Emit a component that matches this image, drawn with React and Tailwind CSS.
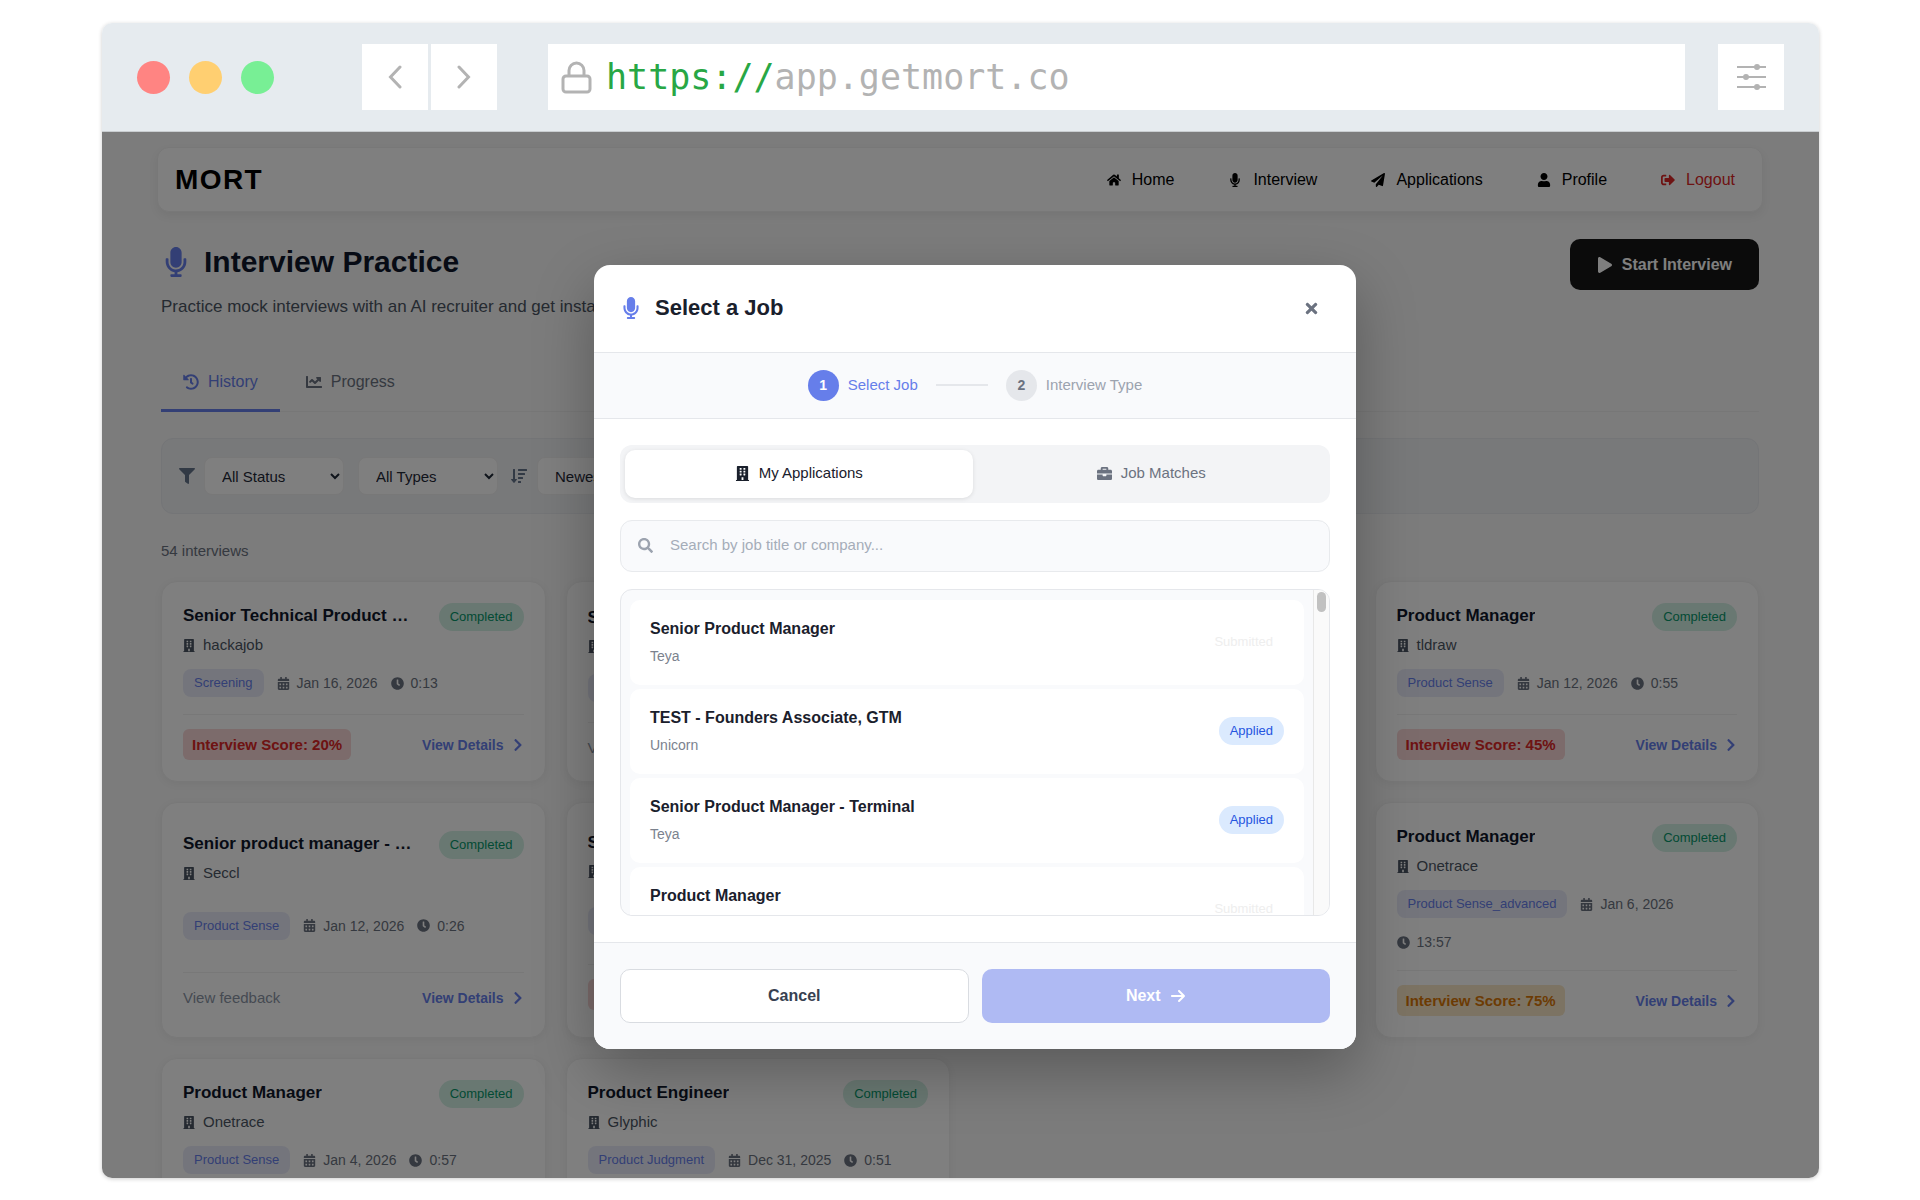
import React from "react";
import {
  FaHome,
  FaMicrophone,
  FaPaperPlane,
  FaUser,
  FaSignOutAlt,
  FaHistory,
  FaChartLine,
  FaFilter,
  FaSortAmountDown,
  FaPlay,
  FaBuilding,
  FaCalendarAlt,
  FaChevronRight,
  FaClock,
  FaTimes,
  FaBriefcase,
  FaSearch,
} from "react-icons/fa";
import { FaArrowRight } from "react-icons/fa6";

const NAV_LINKS = [
  { label: "Home", icon: FaHome, tone: "text-black" },
  { label: "Interview", icon: FaMicrophone, tone: "text-black" },
  { label: "Applications", icon: FaPaperPlane, tone: "text-black" },
  { label: "Profile", icon: FaUser, tone: "text-black" },
  { label: "Logout", icon: FaSignOutAlt, tone: "text-[#dc2626]" },
];

const INTERVIEWS = [
  { title: "Senior Technical Product …", company: "hackajob", type: "Screening", date: "Jan 16, 2026", length: "0:13", score: 20 },
  { title: "Senior Product Manager", company: "Teya", type: "Screening", date: "Jan 14, 2026", length: "0:20" },
  { title: "Product Manager", company: "tldraw", type: "Product Sense", date: "Jan 12, 2026", length: "0:55", score: 45, place: "col-start-4" },
  { title: "Senior product manager - …", company: "Seccl", type: "Product Sense", date: "Jan 12, 2026", length: "0:26" },
  { title: "Senior Product Manager", company: "Teya", type: "Product Sense", date: "Jan 8, 2026", length: "0:40", score: 30 },
  { title: "Product Manager", company: "Onetrace", type: "Product Sense_advanced", date: "Jan 6, 2026", length: "13:57", score: 75, place: "col-start-4" },
  { title: "Product Manager", company: "Onetrace", type: "Product Sense", date: "Jan 4, 2026", length: "0:57" },
  { title: "Product Engineer", company: "Glyphic", type: "Product Judgment", date: "Dec 31, 2025", length: "0:51" },
];

const JOBS = [
  { title: "Senior Product Manager", company: "Teya", status: "Submitted" },
  { title: "TEST - Founders Associate, GTM", company: "Unicorn", status: "Applied" },
  { title: "Senior Product Manager - Terminal", company: "Teya", status: "Applied" },
  { title: "Product Manager", company: "Onetrace", status: "Submitted" },
];

function BrowserBar() {
  return (
    <div className="flex shrink-0 items-center border-b border-[#c9cdd0] bg-[#e6ebef] px-[35px] py-[21px]">
      <div className="flex gap-[19px]">
        <span className="size-[33px] rounded-full bg-[#ff8482]" />
        <span className="size-[33px] rounded-full bg-[#ffcf71]" />
        <span className="size-[33px] rounded-full bg-[#78ef95]" />
      </div>
      <div className="ml-[88px] flex gap-[3px]">
        <button aria-label="Back" className="flex size-[66px] items-center justify-center bg-white">
          <svg width="14" height="24" viewBox="0 0 14 24" fill="none" stroke="#b3b3b3" strokeWidth="3" strokeLinecap="round">
            <path d="M12 2 2.500 12 12 22" />
          </svg>
        </button>
        <button aria-label="Forward" className="flex size-[66px] items-center justify-center bg-white">
          <svg width="14" height="24" viewBox="0 0 14 24" fill="none" stroke="#b3b3b3" strokeWidth="3" strokeLinecap="round">
            <path d="M2 2 11.500 12 2 22" />
          </svg>
        </button>
      </div>
      <div className="ml-[51px] flex h-[66px] grow items-center gap-[14px] bg-white pl-[13px]">
        <svg width="31" height="33" viewBox="0 0 31 33" fill="none" stroke="#b3b3b3" strokeWidth="3">
          <rect x="2" y="15" width="27" height="16" rx="3" />
          <path d="M8 15V9.500a7.500 7.500 0 0 1 15 0V15" />
        </svg>
        <p className="font-['DejaVu_Sans_Mono',monospace] text-[35px] leading-[42px] text-[#b3b3b3]">
          <span className="text-[#28a745]">https://</span>app.getmort.co
        </p>
      </div>
      <button aria-label="Settings" className="ml-[33px] flex size-[66px] items-center justify-center bg-white">
        <svg width="29" height="26" viewBox="0 0 29 26" stroke="#b3b3b3" strokeWidth="2" fill="#b3b3b3">
          <path d="M0 3h29M0 13h29M0 23h29" />
          <circle cx="20" cy="3" r="2" />
          <circle cx="9" cy="13" r="2" />
          <circle cx="20" cy="23" r="2" />
        </svg>
      </button>
    </div>
  );
}

function InterviewCard({ title, company, type, date, length, score, place = "" }) {
  const tone = score >= 70 ? "bg-[#f9e7c6] text-[#d97706]" : "bg-[#f9d6d6] text-[#dc2626]";
  return (
    <article className={`flex flex-col justify-around rounded-2xl border border-[#f1f1f1] bg-white p-[21px] shadow-[0_2px_8px_rgba(0,0,0,0.05)] ${place}`}>
      <div className="mb-[13px] flex items-start justify-between">
        <div className="min-w-0">
          <h3 className="truncate text-[17px] leading-[26px] font-bold text-[#0f172a]">{title}</h3>
          <p className="mt-[5px] flex items-center gap-2 text-[15px] leading-[22px] text-[#4b5563]">
            <FaBuilding className="w-3" size={13} />
            {company}
          </p>
        </div>
        <span className="shrink-0 rounded-full bg-[#d2f0e4] px-[11px] text-[13px] leading-[28px] text-[#059669]">Completed</span>
      </div>
      <div className="mb-[17px] flex flex-wrap items-center gap-[13px] text-[14px] leading-[22px] text-[#6b7280]">
        <span className="rounded-lg bg-[#e9ebf9] px-[11px] text-[13px] leading-[28px] text-[#667eea]">{type}</span>
        <span className="flex items-center gap-[7px]">
          <FaCalendarAlt size={13} />
          {date}
        </span>
        <span className="flex items-center gap-[7px]">
          <FaClock size={13} />
          {length}
        </span>
      </div>
      <div className="flex items-center justify-between border-t border-[#f0f0f0] pt-[14px]">
        {score ? (
          <span className={`rounded-md px-[9px] text-[15px] leading-[31px] font-bold ${tone}`}>Interview Score: {score}%</span>
        ) : (
          <span className="text-[15px] leading-[22px] text-[#8b95a5]">View feedback</span>
        )}
        <a href="#details" className="flex items-center gap-2 text-[14px] leading-[22px] font-bold text-[#667eea]">
          View Details
          <FaChevronRight size={14} className="w-3" />
        </a>
      </div>
    </article>
  );
}

function Filter({ label, value }) {
  return (
    <select aria-label={label} className="h-[38px] w-[140px] rounded-lg border border-[#f0f0f0] bg-white pl-[13px] text-[15px] text-[#1f2937]">
      <option>{value}</option>
    </select>
  );
}

function PracticePage() {
  return (
    <div className="h-full overflow-hidden bg-[#f8f8f8] pt-[15px] pr-14 pl-[55px]">
      <nav className="flex h-[65px] items-center justify-between rounded-xl border border-[#f0f0f0] bg-white pr-[27px] pl-[17px] shadow-[0_4px_10px_rgba(0,0,0,0.06)]">
        <a href="#home" className="text-[28px] leading-8 font-bold tracking-wider text-black">MORT</a>
        <div className="flex items-center gap-[54px]">
          {NAV_LINKS.map(({ label, icon: Icon, tone }) => (
            <a key={label} href={`#${label}`} className={`flex items-center gap-[11px] text-[16px] leading-6 ${tone}`}>
              <Icon size={14} />
              {label}
            </a>
          ))}
        </div>
      </nav>

      <main className="px-1">
        <header className="mt-[27px] flex items-start justify-between">
          <div className="pt-[5px]">
            <h1 className="flex items-center gap-[13px] text-[30px] leading-9 font-bold text-[#0f172a]">
              <FaMicrophone size={30} className="text-[#667eea]" />
              Interview Practice
            </h1>
            <p className="mt-[14px] text-[17px] leading-[26px] text-[#4b5563]">
              Practice mock interviews with an AI recruiter and get instant feedback
            </p>
          </div>
          <button className="flex h-[51px] items-center gap-[9px] rounded-[10px] bg-[#171717] px-[27px] text-[16px] font-bold text-white">
            <FaPlay size={16} />
            Start Interview
          </button>
        </header>

        <div className="mt-[35px] flex gap-1 border-b border-[#eeeeee]">
          <button className="-mb-px flex items-center gap-[9px] border-b-[3px] border-[#667eea] px-[22px] py-[15px] text-[16px] leading-6 text-[#667eea]">
            <FaHistory size={16} />
            History
          </button>
          <button className="-mb-px flex items-center gap-[9px] border-b-[3px] border-transparent px-[22px] py-[15px] text-[16px] leading-6 text-[#6b7280]">
            <FaChartLine size={16} />
            Progress
          </button>
        </div>

        <div className="mt-[26px] flex items-center rounded-xl border border-[#e8eaee] bg-[#f0f2f5] px-[17px] py-[18px]">
          <FaFilter size={16} className="mr-[9px] text-[#64748b]" />
          <Filter label="Status" value="All Status" />
          <div className="w-[14px]" />
          <Filter label="Type" value="All Types" />
          <FaSortAmountDown size={16} className="mr-[10px] ml-[13px] text-[#64748b]" />
          <Filter label="Sort" value="Newest First" />
        </div>

        <p className="mt-[26px] text-[15px] leading-[22px] text-[#6b7280]">54 interviews</p>

        <div className="mt-[19px] grid grid-cols-4 gap-5">
          {INTERVIEWS.map((item, i) => (
            <InterviewCard key={i} {...item} />
          ))}
        </div>
      </main>
    </div>
  );
}

function SelectJobDialog() {
  return (
    <section role="dialog" aria-label="Select a Job" className="w-[762px] overflow-hidden rounded-2xl bg-white shadow-[0_22px_60px_rgba(0,0,0,0.28)]">
      <header className="flex h-[88px] items-center justify-between border-b border-[#e5e7eb] pr-9 pl-[26px]">
        <h2 className="flex items-center gap-[13px] text-[22px] leading-7 font-bold text-[#1a202c]">
          <FaMicrophone size={22} className="text-[#667eea]" />
          Select a Job
        </h2>
        <button aria-label="Close" className="text-[#6b7280]">
          <FaTimes size={17} />
        </button>
      </header>

      <ol className="flex h-[66px] items-center justify-center gap-[18px] border-b border-[#e5e7eb] bg-[#f9fafc] text-[15px]">
        <li className="flex items-center gap-[9px] text-[#667eea]">
          <span className="flex size-[31px] items-center justify-center rounded-full bg-[#667eea] text-[14px] font-bold text-white">1</span>
          Select Job
        </li>
        <li aria-hidden="true" className="h-0.5 w-[52px] bg-[#e5e7eb]" />
        <li className="flex items-center gap-[9px] text-[#9ca3af]">
          <span className="flex size-[31px] items-center justify-center rounded-full bg-[#e5e7eb] text-[14px] font-bold text-[#6b7280]">2</span>
          Interview Type
        </li>
      </ol>

      <div className="flex flex-col gap-[17px] p-[26px]">
        <div className="grid grid-cols-2 gap-[5px] rounded-xl bg-[#f3f4f6] p-[5px] text-[15px]">
          <button className="flex h-12 items-center justify-center gap-[9px] rounded-[10px] bg-white text-[#1a202c] shadow-[0_1px_4px_rgba(0,0,0,0.1)]">
            <FaBuilding size={15} />
            My Applications
          </button>
          <button className="flex h-12 items-center justify-center gap-[9px] rounded-[10px] text-[#6b7280]">
            <FaBriefcase size={15} />
            Job Matches
          </button>
        </div>

        <label className="flex h-[52px] items-center gap-[17px] rounded-xl border border-[#e8eaed] bg-[#f9fafc] px-[17px]">
          <FaSearch size={15} className="text-[#9ca3af]" />
          <input
            aria-label="Search jobs"
            placeholder="Search by job title or company..."
            className="min-w-0 grow bg-transparent text-[15px] outline-none placeholder:text-[#a5adb9]"
          />
        </label>

        <div className="flex h-[327px] overflow-hidden rounded-xl border border-[#e5e7eb] bg-[#f9fafc]">
          <ul className="flex grow flex-col gap-1 overflow-hidden px-[9px] pt-[10px]">
            {JOBS.map(({ title, company, status }) => (
              <li key={title} className="flex h-[85px] shrink-0 items-center justify-between rounded-[10px] bg-white px-5">
                <div>
                  <h3 className="text-[16px] leading-6 font-bold text-[#1a202c]">{title}</h3>
                  <p className="mt-1 text-[14px] leading-[22px] text-[#7b828e]">{company}</p>
                </div>
                <span
                  className={`rounded-full px-[11px] text-[13px] leading-[28px] ${
                    status === "Applied" ? "bg-[#dbeafe] text-[#2555e0]" : "text-[#eeeeee]"
                  }`}
                >
                  {status}
                </span>
              </li>
            ))}
          </ul>
          <div className="w-4 shrink-0 border-l border-[#e8e8e8] bg-[#fafafa] py-0.5 pl-[3px]">
            <div className="h-5 w-[9px] rounded-full bg-[#c1c1c1]" />
          </div>
        </div>
      </div>

      <footer className="grid grid-cols-2 gap-[13px] border-t border-[#e5e7eb] bg-[#f9fafc] p-[26px] text-[16px] font-bold">
        <button className="h-[54px] rounded-[10px] border border-[#d9dce1] bg-white text-[#374151]">Cancel</button>
        <button className="flex h-[54px] items-center justify-center gap-[9px] rounded-[10px] bg-[#afbaf3] text-white">
          Next
          <FaArrowRight size={16} />
        </button>
      </footer>
    </section>
  );
}

export default function App() {
  return (
    <div className="h-screen bg-white pt-[23px] pr-[101px] pb-[22px] pl-[102px] font-['Liberation_Sans',Arial,sans-serif]">
      <div className="flex h-full flex-col overflow-hidden rounded-[10px] shadow-[0_1px_4px_rgba(0,0,0,0.2)]">
        <BrowserBar />
        <div className="relative min-h-0 grow">
          <PracticePage />
          <div className="absolute inset-0 flex items-center justify-center bg-black/50 pt-[3px] pl-[29px]">
            <SelectJobDialog />
          </div>
        </div>
      </div>
    </div>
  );
}
